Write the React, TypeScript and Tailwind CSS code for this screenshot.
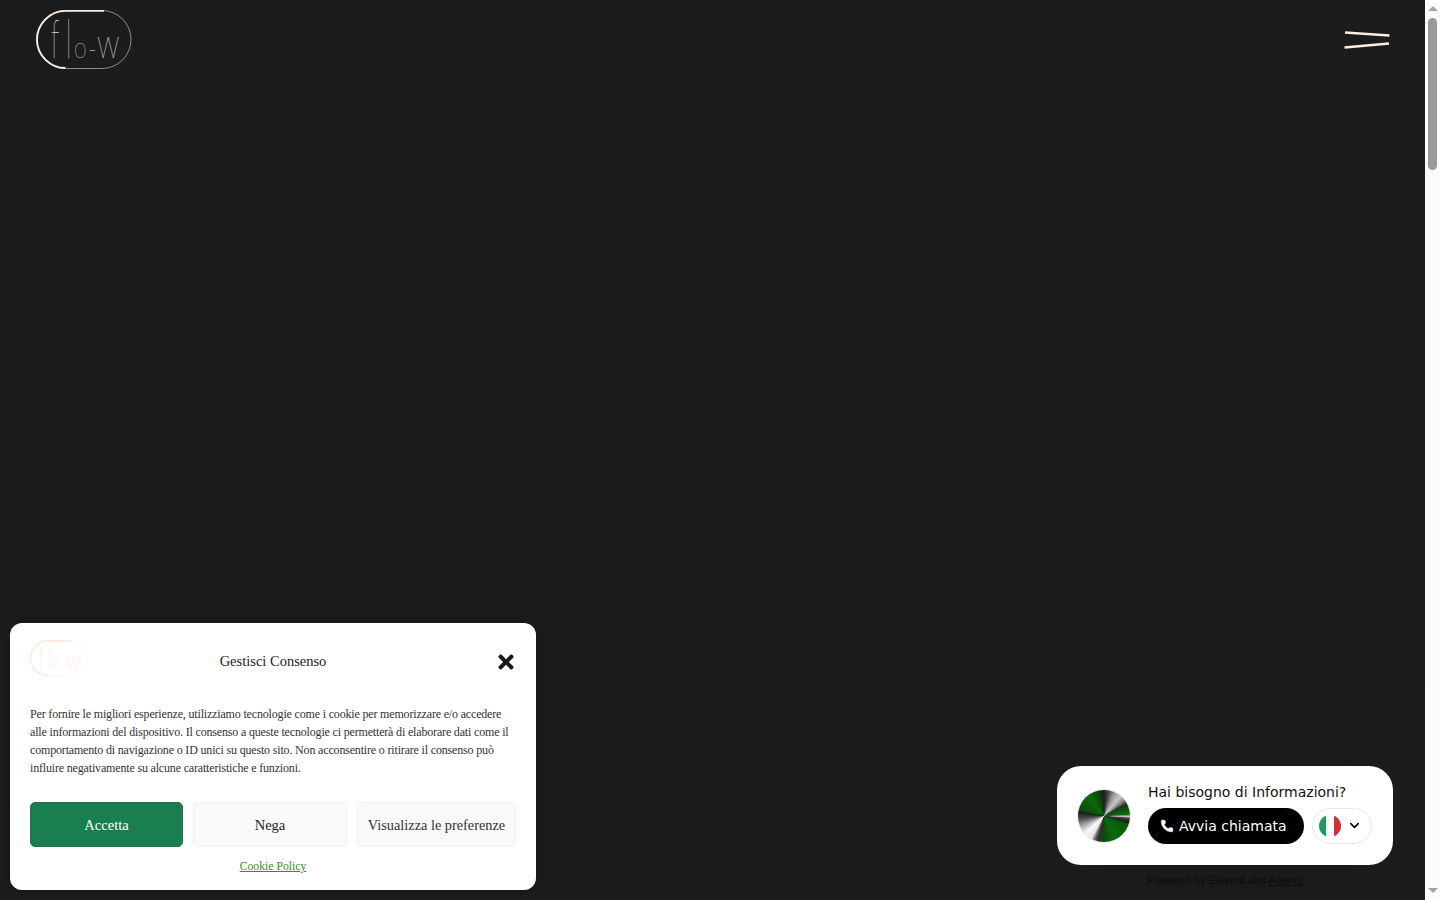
import { Phone, ChevronDown } from "lucide-react";

const Logo = ({ className, faded }: { className: string; faded?: boolean }) => {
  const letters = faded ? "#fbe6d9" : "#c9c9c9";
  return (
    <svg viewBox="0 0 96 60" className={`overflow-visible ${className}`} fill="none">
      <rect x="0.5" y="0.5" width="94.5" height="58" rx="29" stroke={faded ? "#fdf0e8" : "#a9a9a9"} strokeWidth="0.8" />
      <path d="M68 0.8H29.5C14 0.8 1 14 1 29.5S14 58 29.5 58" stroke={faded ? "#fbe3d4" : "#fdeee4"} strokeWidth="1.8" />
      <g fill={letters} stroke={letters} strokeWidth="0.12" fontFamily="Lato, sans-serif" fontWeight="100">
        <text transform="translate(15 48) scale(1.4 3)" fontSize="18">f</text>
        <text transform="translate(30 48) scale(1.4 3)" fontSize="18">l</text>
        <text transform="translate(38 48) scale(1 1.3)" fontSize="23">o</text>
        <text transform="translate(52 48) scale(1.3 1.3)" fontSize="18">-</text>
        <text transform="translate(61 48) scale(1.5 2.1)" fontSize="20">w</text>
      </g>
    </svg>
  );
};

const Orb = () => (
  <div className="h-[54px] w-[54px] shrink-0 rounded-full border border-gray-200 bg-[conic-gradient(from_0deg,#1e1e1e_0deg,#444_10deg,#999_24deg,#c8c8c8_40deg,#888_52deg,#2a2a2a_62deg,#0a4a0a_66deg,#0c6a0c_86deg,#cfcfcf_91deg,#444_95deg,#1c1c1c_104deg,#0a5a0a_110deg,#0a6a0a_155deg,#0c4a0c_180deg,#2e2e2e_192deg,#555_200deg,#e8e8e8_210deg,#f8f8f8_228deg,#aaa_246deg,#555_262deg,#1c1c1c_278deg,#0a4f0a_286deg,#0c6a0c_322deg,#0a4a0a_346deg,#1e1e1e_360deg)]" />
);

const ItalyFlag = () => (
  <div className="flex h-[22px] w-[22px] overflow-hidden rounded-full">
    <div className="flex-1 bg-[#229a57]" />
    <div className="flex-1 bg-white" />
    <div className="flex-1 bg-[#d32f3a]" />
  </div>
);

const CookieBanner = () => (
  <div className="absolute bottom-[10px] left-[10px] z-20 flex h-[267px] w-[526px] flex-col rounded-xl bg-white px-5 pt-[15px] font-['Liberation_Serif',serif] shadow-[0_0_10px_rgba(0,0,0,0.3)]">
    <div className="grid h-[41px] grid-cols-3 items-center">
      <Logo className="h-[41px] w-[58px]" faded />
      <div className="pt-[7px] text-center text-[14.5px] whitespace-nowrap text-[#222]">Gestisci Consenso</div>
      <div className="flex justify-end pt-[7px]">
        <svg viewBox="0 0 352 512" className="mr-[2px] h-[22px] w-[16px] fill-[#191919]">
          <path d="M242.72 256l100.07-100.07c12.28-12.28 12.28-32.19 0-44.48l-22.24-22.24c-12.28-12.28-32.19-12.28-44.48 0L176 189.28 75.93 89.21c-12.28-12.28-32.19-12.28-44.48 0L9.21 111.45c-12.28 12.28-12.28 32.19 0 44.48L109.28 256 9.21 356.07c-12.28 12.28-12.28 32.19 0 44.48l22.24 22.24c12.28 12.28 32.2 12.28 44.48 0L176 322.72l100.07 100.07c12.28 12.28 32.2 12.28 44.48 0l22.24-22.24c12.28-12.28 12.28-32.19 0-44.48L242.72 256z" />
        </svg>
      </div>
    </div>
    <p className="mt-[26px] text-[12px] leading-[18px] tracking-[-0.17px] whitespace-nowrap text-[#333]">
      Per fornire le migliori esperienze, utilizziamo tecnologie come i cookie per memorizzare e/o accedere
      <br />
      alle informazioni del dispositivo. Il consenso a queste tecnologie ci permetterà di elaborare dati come il
      <br />
      comportamento di navigazione o ID unici su questo sito. Non acconsentire o ritirare il consenso può
      <br />
      influire negativamente su alcune caratteristiche e funzioni.
    </p>
    <div className="mt-[25px] flex gap-[10px] text-[14.5px]">
      <button className="h-[45px] w-[153px] rounded-[5px] border border-[#2d6b4d] bg-[#1a7f50] pt-[2px] text-white">Accetta</button>
      <button className="h-[45px] w-[154px] rounded-[5px] border border-[#f2f2f2] bg-[#f9f9f9] pt-[2px] text-[#222]">Nega</button>
      <button className="h-[45px] w-[159px] rounded-[5px] border border-[#f2f2f2] bg-[#f9f9f9] pt-[2px] text-[14.3px] whitespace-nowrap text-[#333]">Visualizza le preferenze</button>
    </div>
    <div className="mt-[12px] text-center text-[11.7px] leading-4">
      <a className="text-[#3f8a24] underline">Cookie Policy</a>
    </div>
  </div>
);

const CallWidget = () => (
  <div className="absolute right-[32px] bottom-[13px] z-10 flex flex-col items-center font-['DejaVu_Sans',sans-serif]">
    <div className="flex h-[99px] w-[336px] items-center gap-[16px] rounded-[24px] bg-white pr-[21px] pl-5 shadow-[0_2px_130px_rgba(0,0,0,0.12)]">
      <Orb />
      <div className="ml-px flex flex-col gap-[6px] pb-[6px]">
        <div className="text-sm leading-[20px] text-[#111]">Hai bisogno di Informazioni?</div>
        <div className="flex gap-2">
          <button className="flex h-9 w-[156px] items-center gap-[5px] rounded-full bg-black pl-3 text-sm text-white">
            <Phone size={14} fill="white" strokeWidth={1} />
            Avvia chiamata
          </button>
          <button className="flex h-9 w-[60px] items-center gap-[6px] rounded-full border border-gray-200 bg-white pl-[6px]">
            <ItalyFlag />
            <ChevronDown size={15} strokeWidth={2.5} className="text-black" />
          </button>
        </div>
      </div>
    </div>
    <div className="mt-[9px] font-['Liberation_Sans',sans-serif] text-[11px] leading-[13px] text-[#0b0b0b]">
      Powered by ElevenLabs <a className="underline">Agents</a>
    </div>
  </div>
);

const Scrollbar = () => (
  <aside className="flex w-[15px] shrink-0 flex-col items-center bg-[#fcfcfc] pt-[6px] pb-[7px]">
    <div className="h-0 w-0 border-x-[5px] border-b-[5px] border-x-transparent border-b-[#a3a3a3]" />
    <div className="mt-[7px] h-[152px] w-[9px] rounded-full bg-[#9a9a9a]" />
    <div className="flex-1" />
    <div className="h-0 w-0 border-x-[5px] border-t-[5px] border-x-transparent border-t-[#a3a3a3]" />
  </aside>
);

export default function App() {
  return (
    <div className="flex h-screen overflow-hidden">
      <main className="relative flex-1 overflow-hidden bg-[#1c1c1c]">
        <header className="flex items-start justify-between pt-[10px] pr-[35px] pl-[36px]">
          <Logo className="h-[60px] w-[96px]" />
          <svg viewBox="0 0 46 18" className="mt-[21px] h-[18px] w-[46px]" fill="none" stroke="#fdeee4" strokeWidth="2.6">
            <path d="M1 1.5L45.5 4.5" />
            <path d="M0.5 16.5L45 12.5" />
          </svg>
        </header>
        <CookieBanner />
        <CallWidget />
      </main>
      <Scrollbar />
    </div>
  );
}
